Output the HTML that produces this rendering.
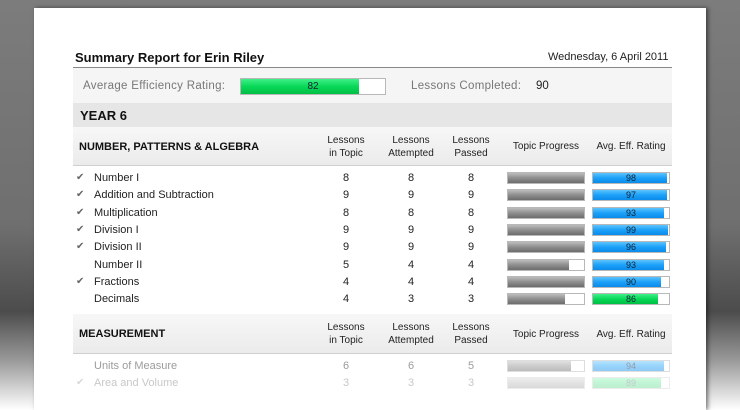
<!DOCTYPE html>
<html><head><meta charset="utf-8"><style>
*{margin:0;padding:0;box-sizing:border-box}
body{width:740px;height:410px;overflow:hidden;position:relative;font-family:"Liberation Sans",Arial,sans-serif;font-size:11px;color:#222;
background:linear-gradient(#7c7c7c 0,#6f6f6f 55%,#4c4c4c 76%,#9a9a9a 88%,#fff 100%)}
.panel{position:absolute;left:34px;top:8px;width:672px;height:402px;background:#fff;box-shadow:2px 0 4px rgba(0,0,0,.5)}
.a{position:absolute;white-space:nowrap}
.bar{position:absolute;height:12px;border:1px solid #b8b8b8;background:#fff;overflow:hidden}
.bar i{position:absolute;left:0;top:0;bottom:0;display:block}
.g i{background:linear-gradient(#bdbdbd,#8e8e8e 50%,#6c6c6c)}
.b i{background:linear-gradient(#5cc4ff,#1ca0f8 50%,#0a8bea)}
.gr i{background:linear-gradient(#3ff088,#08d858 50%,#00be44)}
.bar span{position:absolute;left:0;right:0;top:0;text-align:center;font-size:9px;line-height:10px;color:#123}
.hd{position:absolute;left:73px;width:599px;background:linear-gradient(#f7f7f7,#ebebeb);border-bottom:1px solid #cfcfcf}
.hc{position:absolute;text-align:center;font-size:10px;line-height:13px;color:#222}
.c{position:absolute;width:30px;text-align:center}
</style></head><body>
<div class="panel"></div>
<div class="a" style="left:75px;top:50px;font-size:13px;font-weight:bold;color:#111">Summary Report for Erin Riley</div>
<div class="a" style="left:548px;top:51px;font-size:11px;color:#222">Wednesday, 6 April 2011</div>
<div class="a" style="left:73px;top:67px;width:599px;height:36px;background:#f5f5f5;border-top:1px solid #888"></div>
<div class="a" style="left:83px;top:80px;font-size:11.5px;color:#777;letter-spacing:.3px">Average Efficiency Rating:</div>
<div class="bar gr" style="left:240px;top:78px;width:146px;height:17px"><i style="width:118px"></i><span style="line-height:15px;font-size:10px">82</span></div>
<div class="a" style="left:411px;top:80px;font-size:11.5px;color:#777;letter-spacing:.3px">Lessons Completed:</div>
<div class="a" style="left:536px;top:80px;font-size:11.5px;color:#222">90</div>
<div class="a" style="left:73px;top:103px;width:599px;height:24px;background:#e6e6e6"></div>
<div class="a" style="left:80px;top:108px;font-size:13px;font-weight:bold;color:#111">YEAR 6</div>

<div class="hd" style="top:127px;height:39px"></div>
<div class="a" style="left:79px;top:141px;font-size:11px;font-weight:bold;color:#111">NUMBER, PATTERNS &amp; ALGEBRA</div>
<div class="hc" style="left:316px;top:134px;width:60px">Lessons<br>in Topic</div>
<div class="hc" style="left:381px;top:134px;width:60px">Lessons<br>Attempted</div>
<div class="hc" style="left:441px;top:134px;width:60px">Lessons<br>Passed</div>
<div class="hc" style="left:507px;top:140px;width:78px">Topic Progress</div>
<div class="hc" style="left:590px;top:140px;width:82px">Avg. Eff. Rating</div>

<div class="hd" style="top:314px;height:40px"></div>
<div class="a" style="left:79px;top:328px;font-size:11px;font-weight:bold;color:#111">MEASUREMENT</div>
<div class="hc" style="left:316px;top:321px;width:60px">Lessons<br>in Topic</div>
<div class="hc" style="left:381px;top:321px;width:60px">Lessons<br>Attempted</div>
<div class="hc" style="left:441px;top:321px;width:60px">Lessons<br>Passed</div>
<div class="hc" style="left:507px;top:328px;width:78px">Topic Progress</div>
<div class="hc" style="left:590px;top:328px;width:82px">Avg. Eff. Rating</div>

<div id="rows"></div>
<script>
var R=[
[178,1,"Number I",8,8,8,1,98,"b",1],
[195,1,"Addition and Subtraction",9,9,9,1,97,"b",1],
[213,1,"Multiplication",8,8,8,1,93,"b",1],
[230,1,"Division I",9,9,9,1,99,"b",1],
[247,1,"Division II",9,9,9,1,96,"b",1],
[265,0,"Number II",5,4,4,.8,93,"b",1],
[282,1,"Fractions",4,4,4,1,90,"b",1],
[299,0,"Decimals",4,3,3,.75,86,"gr",1],
[366,0,"Units of Measure",6,6,5,.83,94,"b",.45],
[383,1,"Area and Volume",3,3,3,1,89,"gr",.25]];
var h="";
R.forEach(function(r){var y=r[0],t=y-6,o=r[9];
h+='<div style="position:absolute;left:0;top:0;opacity:'+o+'">';
if(r[1])h+='<div class="a" style="left:76px;top:'+(t)+'px;font-size:10px;color:#666">&#10004;</div>';
h+='<div class="a" style="left:94px;top:'+t+'px">'+r[2]+'</div>';
h+='<div class="c a" style="left:331px;top:'+t+'px">'+r[3]+'</div>';
h+='<div class="c a" style="left:396px;top:'+t+'px">'+r[4]+'</div>';
h+='<div class="c a" style="left:456px;top:'+t+'px">'+r[5]+'</div>';
h+='<div class="bar g" style="left:507px;top:'+(y-6)+'px;width:78px"><i style="width:'+Math.round(76*r[6])+'px"></i></div>';
h+='<div class="bar '+r[8]+'" style="left:592px;top:'+(y-6)+'px;width:78px"><i style="width:'+Math.round(76*r[7]/100)+'px"></i><span>'+r[7]+'</span></div>';
h+='</div>';});
document.getElementById("rows").innerHTML=h;
</script>
</body></html>
